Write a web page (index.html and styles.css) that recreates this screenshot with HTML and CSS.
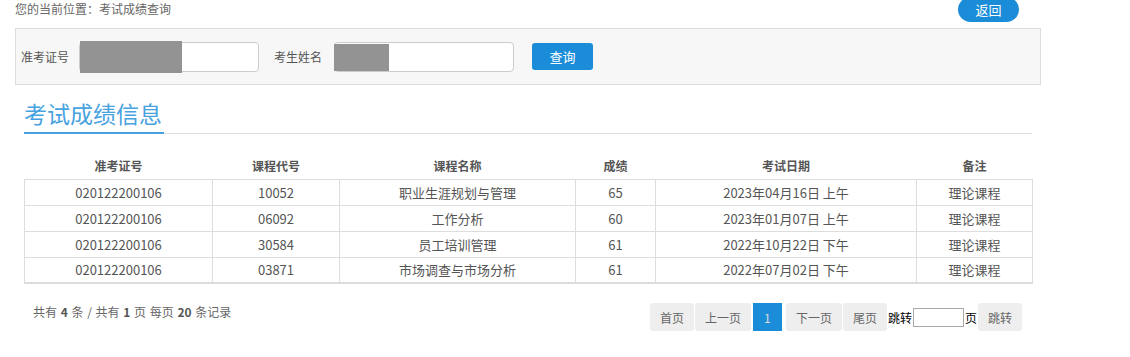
FILE: index.html
```html
<!DOCTYPE html>
<html lang="zh-CN">
<head>
<meta charset="utf-8">
<title>考试成绩查询</title>
<link rel="stylesheet" href="styles.css">
</head>
<body>
<div class="page">
  <div class="topbar">
    <div class="crumb">您的当前位置：考试成绩查询</div>
    <a class="back-btn">返回</a>
  </div>
  <div class="search-box">
    <span class="label label-first">准考证号</span>
    <div class="field"><span class="mask mask-id"></span></div>
    <span class="label label-second">考生姓名</span>
    <div class="field"><span class="mask mask-name"></span></div>
    <a class="query-btn">查询</a>
  </div>
  <div class="content">
    <div class="title-bar"><span class="title">考试成绩信息</span></div>
    <table class="grades">
      <colgroup>
        <col class="c1"><col class="c2"><col class="c3"><col class="c4"><col class="c5"><col class="c6">
      </colgroup>
      <thead>
        <tr><th>准考证号</th><th>课程代号</th><th>课程名称</th><th>成绩</th><th>考试日期</th><th>备注</th></tr>
      </thead>
      <tbody>
        <tr><td>020122200106</td><td>10052</td><td>职业生涯规划与管理</td><td>65</td><td>2023年04月16日 上午</td><td>理论课程</td></tr>
        <tr><td>020122200106</td><td>06092</td><td>工作分析</td><td>60</td><td>2023年01月07日 上午</td><td>理论课程</td></tr>
        <tr><td>020122200106</td><td>30584</td><td>员工培训管理</td><td>61</td><td>2022年10月22日 下午</td><td>理论课程</td></tr>
        <tr><td>020122200106</td><td>03871</td><td>市场调查与市场分析</td><td>61</td><td>2022年07月02日 下午</td><td>理论课程</td></tr>
      </tbody>
    </table>
    <div class="footer">
      <div class="summary">共有 <b>4</b> 条 / 共有 <b>1</b> 页 每页 <b>20</b> 条记录</div>
      <div class="pager">
        <a class="pg">首页</a>
        <a class="pg">上一页</a>
        <a class="pg pg-num active">1</a>
        <a class="pg">下一页</a>
        <a class="pg">尾页</a>
        <span class="jump-text">跳转</span>
        <input class="jump-input" type="text">
        <span class="jump-text">页</span>
        <a class="pg">跳转</a>
      </div>
    </div>
  </div>
</div>
</body>
</html>
```
FILE: styles.css
```css
* { box-sizing: border-box; }
html, body { margin: 0; padding: 0; background: #fff; }
body {
  font-family: "Microsoft YaHei", "Noto Sans CJK SC", "Noto Sans", sans-serif;
  font-size: 12px;
  color: #666;
  overflow: hidden;
}
a { text-decoration: none; cursor: pointer; }

.page { padding-left: 15px; width: 1041px; }

.topbar {
  height: 28px;
  display: flex;
  justify-content: space-between;
  align-items: flex-start;
}
.crumb {
  font-size: 12px;
  line-height: 18px;
  color: #666;
}
.back-btn {
  margin-top: -3px;
  margin-right: 22px;
  width: 61px;
  height: 25px;
  border-radius: 13px;
  background: #1a8cd8;
  color: #fff;
  font-size: 13px;
  display: flex;
  align-items: center;
  justify-content: center;
}

.search-box {
  width: 1026px;
  height: 57px;
  border: 1px solid #ddd;
  background: #f7f7f7;
  display: flex;
  align-items: center;
  padding-left: 5px;
}
.label { font-size: 12px; color: #555; line-height: 20px; }
.label-first { margin-right: 10px; }
.label-second { margin-left: 15px; margin-right: 12px; }
.field {
  position: relative;
  width: 180px;
  height: 30px;
  background: #fff;
  border: 1px solid #ccc;
  border-radius: 4px;
}
.mask { position: absolute; background: #939393; }
.mask-id { left: 0; top: -2px; bottom: -2px; width: 102px; }
.mask-name { left: -1px; top: 1px; bottom: 0; width: 55px; }
.query-btn {
  margin-left: 18px;
  width: 61px;
  height: 27px;
  border-radius: 3px;
  background: #1a8cd8;
  color: #fff;
  font-size: 13px;
  display: flex;
  align-items: center;
  justify-content: center;
}

.content { margin-left: 9px; width: 1008px; }

.title-bar {
  margin-top: 13px;
  border-bottom: 1px solid #ddd;
  height: 36px;
}
.title {
  display: inline-block;
  font-size: 23px;
  line-height: 30px;
  padding-bottom: 4px;
  padding-right: 2px;
  color: #47a2e0;
  border-bottom: 2px solid #47a2e0;
}

.grades {
  margin-top: 19px;
  width: 1008px;
  table-layout: fixed;
  border-collapse: collapse;
  color: #555;
}
.c1 { width: 188px; }
.c2 { width: 127px; }
.c3 { width: 236px; }
.c4 { width: 80px; }
.c5 { width: 261px; }
.c6 { width: 116px; }
.grades th {
  height: 26px;
  padding: 0;
  font-size: 12px;
  font-weight: bold;
  text-align: center;
  color: #555;
}
.grades td {
  height: 26px;
  padding: 0;
  font-size: 13px;
  text-align: center;
  border: 1px solid #ddd;
}
.grades tbody tr:last-child td { border-bottom: 2px solid #ddd; }

.footer {
  margin-top: 19px;
  display: flex;
  justify-content: space-between;
  align-items: flex-start;
  padding: 0 10px 0 9px;
}
.summary { font-size: 12px; line-height: 18px; color: #666; word-spacing: 1px; }
.summary b { color: #555; }

.pager { display: flex; align-items: center; gap: 1px; }
.pg {
  height: 28px;
  padding: 0 10px;
  background: #eee;
  color: #666;
  border-radius: 3px;
  font-size: 12px;
  display: flex;
  align-items: center;
  justify-content: center;
}
.pg-num { width: 29px; padding: 0; margin-left: 1px; margin-right: 3px; border-radius: 0; }
.active { background: #1a8cd8; color: #ddd; }
.jump-text { font-size: 12px; color: #000; }
.jump-input {
  width: 51px;
  height: 19px;
  margin: 0;
  padding: 0 2px;
  border: 1px solid #a9a9a9;
  background: #fff;
  font-size: 12px;
}
```
